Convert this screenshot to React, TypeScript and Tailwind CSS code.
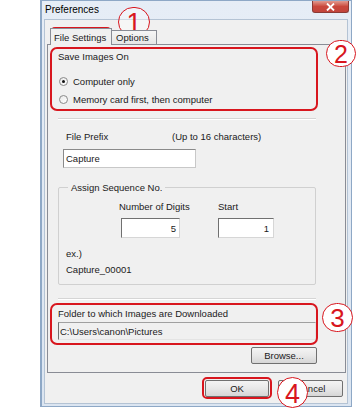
import React from "react";

const RED = "border-[#d8161e]";

function Radio({ checked, label }: { checked?: boolean; label: string }) {
  return (
    <div className="flex items-center h-[11px] leading-[11px]">
      <span className="ml-[1px] w-[9px] h-[9px] rounded-full border border-[#8a8a8a] bg-gradient-to-br from-[#e8e8e8] to-white flex items-center justify-center">
        {checked && <span className="w-[3px] h-[3px] rounded-full bg-[#111]" />}
      </span>
      <span className="ml-[5px]">{label}</span>
    </div>
  );
}

function Btn({ label, w }: { label: string; w: string }) {
  return (
    <div
      className={`${w} h-[17px] rounded-[2px] border border-[#707070] bg-gradient-to-b from-[#f4f4f4] via-[#e8e8e8] to-[#d6d6d6] flex items-center justify-center leading-[11px]`}
    >
      {label}
    </div>
  );
}

export default function App() {
  return (
    <div className="relative w-[358px] h-[409px] bg-white overflow-hidden font-['Liberation_Sans',Arial,sans-serif] text-[9.5px] text-[#1a1a1a]">
      {/* Window */}
      <div className="ml-[40px] w-[312px] h-[407px] flex flex-col border border-[#8ea8c6] border-l-2 bg-gradient-to-b from-[#e6edf6] to-[#dbe5f1]">
        {/* Title bar */}
        <div className="h-[18px] flex items-start shrink-0">
          <span className="ml-[3px] mt-[3px] text-[10px] leading-[12px] text-black">Preferences</span>
          <div className="ml-auto mr-[2px] w-[37px] h-[12px] rounded-b-[3px] border border-t-0 border-[#8a3a35] bg-gradient-to-b from-[#e09a90] via-[#c9473c] to-[#c2453c] flex items-center justify-center">
            <svg width="9" height="8" viewBox="0 0 9 8">
              <path d="M1 0.5 L8 7.5 M8 0.5 L1 7.5" stroke="white" strokeWidth="1.8" />
            </svg>
          </div>
        </div>
        {/* Client */}
        <div className="ml-[2px] mr-[3px] mb-[2px] flex-1 bg-[#f0f0f0] border border-[#b4c3d4] flex flex-col pl-[2px] pr-[1px] pt-[8px]">
          {/* Tabs */}
          <div className="h-[16px] flex items-end relative z-10">
            <div className="ml-[3px] w-[62px] h-[17px] -mb-px border border-b-0 border-[#898c95] bg-[#f0f0f0] flex items-center pl-[3px] leading-[11px]">
              File Settings
            </div>
            <div className="w-[45px] h-[14px] border border-l-0 border-b-0 border-[#898c95] bg-gradient-to-b from-[#f6f6f6] to-[#e6e6e6] flex items-center pl-[4px] leading-[11px]">
              Options
            </div>
          </div>
          {/* Panel */}
          <div className="h-[329px] border border-[#898c95] bg-[#f0f0f0] flex flex-col pl-[10px] pr-[29px]">
            <div className="mt-[6px] h-[11px] leading-[11px]">Save Images On</div>
            <div className="mt-[14px]">
              <Radio checked label="Computer only" />
            </div>
            <div className="mt-[7px]">
              <Radio label="Memory card first, then computer" />
            </div>
            <div className="mt-[13px] h-[2px] border-t border-b border-t-[#d5d5d5] border-b-white" />
            <div className="mt-[11px] h-[11px] leading-[11px] flex">
              <span className="ml-[8px] w-[106px]">File Prefix</span>
              <span>(Up to 16 characters)</span>
            </div>
            <div className="mt-[7px] ml-[5px] w-[133px] h-[19px] bg-white border border-[#c8c8c8] border-t-[#8a8a8a] border-l-[#8a8a8a] flex items-center pl-[2px] leading-[11px]">
              Capture
            </div>
            {/* Group box */}
            <div className="relative mt-[19px] h-[98px] border border-[#d0d0d0] rounded-[2px] flex flex-col">
              <span className="absolute -top-[6px] left-[9px] px-[3px] bg-[#f0f0f0] leading-[11px]">Assign Sequence No.</span>
              <div className="mt-[13px] h-[11px] leading-[11px] flex">
                <span className="ml-[60px] w-[99px]">Number of Digits</span>
                <span>Start</span>
              </div>
              <div className="mt-[6px] flex">
                <div className="ml-[62px] w-[59px] h-[20px] bg-white border border-[#d6d6d6] border-t-[#707070] border-l-[#707070] flex items-center justify-end pr-[3px] leading-[11px]">
                  5
                </div>
                <div className="ml-[38px] w-[56px] h-[20px] bg-white border border-[#d6d6d6] border-t-[#707070] border-l-[#707070] flex items-center justify-end pr-[4px] leading-[11px]">
                  1
                </div>
              </div>
              <div className="mt-[10px] ml-[7px] h-[11px] leading-[11px]">ex.)</div>
              <div className="mt-[5px] ml-[7px] h-[11px] leading-[11px]">Capture_00001</div>
            </div>
            <div className="mt-[13px] h-[2px] border-t border-b border-t-[#d5d5d5] border-b-white" />
            <div className="mt-[8px] h-[11px] leading-[11px]">Folder to which Images are Downloaded</div>
            <div className="mt-[3px] h-[18px] border border-[#e4e4e4] border-t-[#a0a0a0] border-l-[#707070] flex items-center pl-[1px] leading-[11px]">
              C:\Users\canon\Pictures
            </div>
            <div className="mt-[7px] self-end -mr-[1px]">
              <Btn label="Browse..." w="w-[66px]" />
            </div>
          </div>
          {/* Bottom buttons */}
          <div className="mt-[7px] flex justify-end gap-[9px] mr-[3px]">
            <Btn label="OK" w="w-[64px]" />
            <Btn label="Cancel" w="w-[65px]" />
          </div>
        </div>
      </div>

      {/* Annotations */}
      <div className={`absolute left-[50px] top-[27px] w-[62px] h-[18px] border-2 ${RED} rounded-[5px]`} />
      <div className={`absolute left-[50px] top-[47px] w-[268px] h-[64px] border-2 ${RED} rounded-[7px]`} />
      <div className={`absolute left-[50px] top-[303px] w-[268px] h-[42px] border-2 ${RED} rounded-[7px]`} />
      <div className={`absolute left-[202px] top-[377px] w-[70px] h-[22px] border-2 ${RED} rounded-[5px]`} />

      <div className="absolute left-[118px] top-[7px] w-[32px] h-[30px] rounded-full border-[1.5px] border-[#d8161e] bg-white/40 text-center text-[#d8161e] text-[27px] leading-[27px]">
        <span className="inline-block translate-y-[2px]">1</span>
      </div>
      <div className="absolute left-[326px] top-[40px] w-[30px] h-[27px] rounded-full border-[1.5px] border-[#d8161e] bg-white text-center text-[#d8161e] text-[25px] leading-[24px]">
        <span className="inline-block translate-y-[1px]">2</span>
      </div>
      <div className="absolute left-[322px] top-[303px] w-[31px] h-[29px] rounded-full border-[1.5px] border-[#d8161e] bg-white text-center text-[#d8161e] text-[26px] leading-[26px]">
        <span className="inline-block translate-y-[1px]">3</span>
      </div>
      <div className="absolute left-[277px] top-[377px] w-[31px] h-[31px] rounded-full border-[1.5px] border-[#d8161e] bg-white text-center text-[#d8161e] text-[27px] leading-[28px]">
        <span className="inline-block translate-y-[2px]">4</span>
      </div>
    </div>
  );
}
